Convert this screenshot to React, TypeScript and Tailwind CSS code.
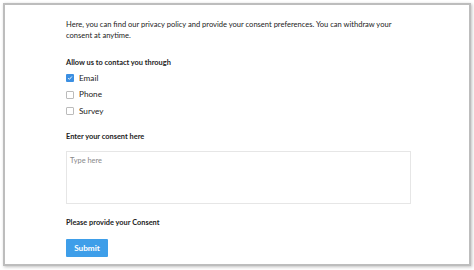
export default function App() {
  return (
    <div className="h-[270px] w-[474px] bg-white p-[3px] font-['Lato',sans-serif] text-[#222]">
      <div className="h-[263px] w-[468px] border-2 border-[#bdbdbd] bg-white pl-[61px] pt-[14px] shadow-[1px_1px_3px_rgba(0,0,0,0.25)]">
        <p className="whitespace-nowrap text-[7.55px] leading-[11px]">
          Here, you can find our privacy policy and provide your consent preferences. You can withdraw your
          <br />
          consent at anytime.
        </p>

        <h3 className="mt-[17px] text-[7.4px] font-bold leading-[10px]">Allow us to contact you through</h3>
        <div className="mt-[5px] flex flex-col gap-[6.5px]">
          <Option label="Email" checked />
          <Option label="Phone" />
          <Option label="Survey" />
        </div>

        <h3 className="mt-[16px] text-[7.4px] font-bold leading-[10px]">Enter your consent here</h3>
        <div className="mt-[9px] h-[53px] w-[345px] border border-[#e6e6e6] px-[3px] py-[3px] text-[7.4px] text-[#888]">
          Type here
        </div>

        <h3 className="mt-[14px] text-[7.4px] font-bold leading-[10px]">Please provide your Consent</h3>
        <button className="mt-[11px] h-[18px] w-[42px] rounded-[1px] bg-[#3e9ee9] text-[8.2px] font-bold text-white">
          Submit
        </button>
      </div>
    </div>
  );
}

function Option({ label, checked }: { label: string; checked?: boolean }) {
  return (
    <label className="flex h-[10px] items-center gap-[5px] text-[8.2px]">
      {checked ? (
        <span className="flex h-[8px] w-[8px] items-center justify-center rounded-[1px] bg-[#3b8fe2]">
          <svg viewBox="0 0 8 8" className="h-[6px] w-[6px]">
            <path d="M1.5 4.2 3.2 5.8 6.5 2" fill="none" stroke="white" strokeWidth="1.2" />
          </svg>
        </span>
      ) : (
        <span className="h-[8px] w-[8px] rounded-[1px] border border-[#bbb] bg-white" />
      )}
      <span>{label}</span>
    </label>
  );
}
